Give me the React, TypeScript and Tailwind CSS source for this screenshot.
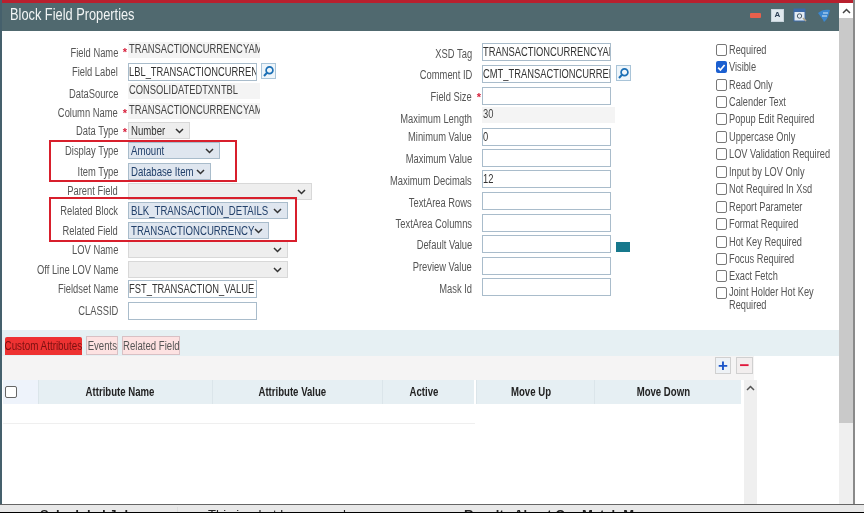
import React from 'react';

type LeftRow = { label: string; star?: boolean; row: string; pad: string; control: React.ReactNode };

const font = { fontFamily: '"Liberation Sans", Arial, sans-serif' };

// the whole capture is squeezed sideways, so text is narrower than Arial
function Squeezed({ children, className = 'origin-left scale-x-[0.78]' }: { children: React.ReactNode; className?: string }) {
  return <span className={`inline-block whitespace-nowrap ${className}`}>{children}</span>;
}

function Star() {
  return <span className="absolute right-[-9px] top-[2px] text-[11px] font-bold text-[#d8203c]">*</span>;
}

function Input({ value, w = 'w-[129px]', h = 'h-[18px]' }: { value?: string; w?: string; h?: string }) {
  return (
    <div className={`${w} ${h} shrink-0 overflow-hidden whitespace-nowrap border border-[#a9bccb] bg-white text-[13px] leading-[15px] text-[#333]`}>
      {value && <Squeezed className="origin-left scale-x-[0.72]">{value}</Squeezed>}
    </div>
  );
}

function ReadOnly({ value, w = 'w-[132px]' }: { value: string; w?: string }) {
  return (
    <div className={`${w} h-[16px] shrink-0 overflow-hidden whitespace-nowrap bg-[#f4f4f4] pl-px text-[13px] leading-[14px] text-[#444]`}>
      <Squeezed className="origin-left scale-x-[0.72]">{value}</Squeezed>
    </div>
  );
}

function Select({ value, w, tinted }: { value?: string; w: string; tinted?: boolean }) {
  return (
    <div
      className={`${w} flex h-[17px] shrink-0 items-center border pl-[2px] pr-[5px] text-[13px] ${
        tinted ? 'border-[#a9bccb] bg-[#dfe6ef] text-[#22406a]' : 'border-[#d8d8d8] bg-[#eeeeee] text-[#333]'
      }`}
    >
      <span className="w-0 flex-1 leading-[14px]">{value && <Squeezed className="origin-left scale-x-[0.74]">{value}</Squeezed>}</span>
      <svg width="9" height="6" viewBox="0 0 9 6" className="shrink-0">
        <path d="M1 1l3.5 3.5L8 1" fill="none" stroke="#333" strokeWidth="1.5" />
      </svg>
    </div>
  );
}

function SearchButton() {
  return (
    <div className="flex h-[16px] w-[15px] shrink-0 items-center justify-center border border-[#a9c4d8] bg-[#eef5fa]">
      <svg width="13" height="13" viewBox="0 0 13 13">
        <circle cx="7.5" cy="5.2" r="3.4" fill="none" stroke="#1b6fb5" strokeWidth="1.7" />
        <path d="M5 7.8L2 11" stroke="#1b6fb5" strokeWidth="2" />
      </svg>
    </div>
  );
}

const leftRows: LeftRow[] = [
  { label: 'Field Name', star: true, row: 'h-[21px]', pad: 'pt-[3px]', control: <ReadOnly value="TRANSACTIONCURRENCYAM" /> },
  {
    label: 'Field Label',
    row: 'h-[20px]',
    pad: 'pt-px',
    control: (
      <div className="flex gap-1">
        <Input value="LBL_TRANSACTIONCURREN" />
        <SearchButton />
      </div>
    ),
  },
  { label: 'DataSource', row: 'h-[20px]', pad: 'pt-[3px]', control: <ReadOnly value="CONSOLIDATEDTXNTBL" /> },
  { label: 'Column Name', star: true, row: 'h-[19px]', pad: 'pt-[2px]', control: <ReadOnly value="TRANSACTIONCURRENCYAM" /> },
  { label: 'Data Type', star: true, row: 'h-[20px]', pad: 'pt-px', control: <Select value="Number" w="w-[62px]" /> },
  { label: 'Display Type', row: 'h-[21px]', pad: 'pt-px', control: <Select value="Amount" w="w-[92px]" tinted /> },
  { label: 'Item Type', row: 'h-[20px]', pad: 'pt-px', control: <Select value="Database Item" w="w-[83px]" tinted /> },
  { label: 'Parent Field', row: 'h-[19px]', pad: 'pt-0', control: <Select w="w-[184px]" /> },
  { label: 'Related Block', row: 'h-[20px]', pad: 'pt-px', control: <Select value="BLK_TRANSACTION_DETAILS" w="w-[160px]" tinted /> },
  { label: 'Related Field', row: 'h-[19px]', pad: 'pt-px', control: <Select value="TRANSACTIONCURRENCY" w="w-[141px]" tinted /> },
  { label: 'LOV Name', row: 'h-[20px]', pad: 'pt-px', control: <Select w="w-[160px]" /> },
  { label: 'Off Line LOV Name', row: 'h-[19px]', pad: 'pt-px', control: <Select w="w-[160px]" /> },
  { label: 'Fieldset Name', row: 'h-[22px]', pad: 'pt-px', control: <Input value="FST_TRANSACTION_VALUE" /> },
  { label: 'CLASSID', row: 'h-[20px]', pad: 'pt-px', control: <Input /> },
];

type MidRow = { label: string; star?: boolean; row: string; pad: string; value?: string; extra?: React.ReactNode; readOnly?: boolean };

const midRows: MidRow[] = [
  { label: 'XSD Tag', row: 'h-[22px]', pad: 'pt-[3px]', value: 'TRANSACTIONCURRENCYAM' },
  { label: 'Comment ID', row: 'h-[22px]', pad: 'pt-[2px]', value: 'CMT_TRANSACTIONCURREN', extra: <SearchButton /> },
  { label: 'Field Size', star: true, row: 'h-[20px]', pad: 'pt-[2px]' },
  { label: 'Maximum Length', row: 'h-[21px]', pad: 'pt-[4px]', value: '30', readOnly: true },
  { label: 'Minimum Value', row: 'h-[21px]', pad: 'pt-px', value: '0' },
  { label: 'Maximum Value', row: 'h-[21px]', pad: 'pt-[2px]' },
  { label: 'Maximum Decimals', row: 'h-[22px]', pad: 'pt-[3px]', value: '12' },
  { label: 'TextArea Rows', row: 'h-[22px]', pad: 'pt-[3px]' },
  { label: 'TextArea Columns', row: 'h-[21px]', pad: 'pt-[2px]' },
  {
    label: 'Default Value',
    row: 'h-[22px]',
    pad: 'pt-[2px]',
    extra: <div className="mt-[7px] h-[10px] w-[14px] bg-[#17788c]" />,
  },
  { label: 'Preview Value', row: 'h-[21px]', pad: 'pt-[2px]' },
  { label: 'Mask Id', row: 'h-[20px]', pad: 'pt-[3px]' },
];

const checks = [
  'Required',
  'Visible',
  'Read Only',
  'Calender Text',
  'Popup Edit Required',
  'Uppercase Only',
  'LOV Validation Required',
  'Input by LOV Only',
  'Not Required In Xsd',
  'Report Parameter',
  'Format Required',
  'Hot Key Required',
  'Focus Required',
  'Exact Fetch',
];

function Check({ checked }: { checked?: boolean }) {
  if (checked) {
    return (
      <div className="flex h-[12px] w-[11px] shrink-0 items-center justify-center rounded-[2px] bg-[#1b5fd0]">
        <svg width="9" height="9" viewBox="0 0 9 9">
          <path d="M1.2 4.6l2.2 2.4 4.2-5" fill="none" stroke="#fff" strokeWidth="1.7" />
        </svg>
      </div>
    );
  }
  return <div className="h-[12px] w-[11px] shrink-0 rounded-[2px] border border-[#777] bg-white" />;
}

function HeaderIcons() {
  return (
    <div className="flex items-center">
      <div className="h-[5px] w-[11px] rounded-[1px] bg-[#e8604c]" />
      <div className="ml-[10px] flex h-[13px] w-[13px] items-center justify-center border border-[#c8d4dc] bg-[#dfe8ee] text-[8px] font-bold leading-none text-[#2b3e55]">
        A
      </div>
      <svg width="15" height="15" viewBox="0 0 15 15" className="ml-[9px]">
        <rect x="1" y="1" width="11" height="12" fill="#e3ebf3" stroke="#3c6aa8" />
        <rect x="1" y="1" width="11" height="3" fill="#3c6aa8" />
        <circle cx="6.5" cy="8" r="2.2" fill="none" stroke="#4a5b6a" />
        <path d="M10 10l3 3" stroke="#b0a58c" strokeWidth="1.6" />
      </svg>
      <svg width="15" height="15" viewBox="0 0 15 15" className="ml-[8px]">
        <path d="M2 5c3-3 8-4 12-3-1 4-2 9-6 12-1-3-4-6-6-9z" fill="#3a86d0" />
        <path d="M7 5h5M6 8h5" stroke="#d6e8f7" strokeWidth="1.2" />
      </svg>
    </div>
  );
}

const headerCell = 'flex items-center justify-center border-l border-[#dbe5ea] bg-[#e6eff3] pr-[10px]';

export default function App() {
  return (
    <div className="relative flex h-[513px] w-[864px] flex-col overflow-hidden bg-white text-[12px] text-[#555] blur-[0.35px]" style={font}>
      <div className="flex h-[504px] shrink-0">
        <div className="flex w-[853px] flex-col border-l-2 border-[#45606c]">
          <div className="h-[3px] shrink-0 bg-[#b8202e]" />
          <div className="flex min-h-0 flex-1">
            <div className="flex min-w-0 flex-1 flex-col">
              <div className="flex h-[28px] shrink-0 items-center justify-between bg-[#50696f] pb-[4px] pl-[8px] pr-[8px]">
                <span className="text-[16px] leading-none text-[#f2f5f5]">
                  <Squeezed className="origin-left scale-x-[0.8]">Block Field Properties</Squeezed>
                </span>
                <HeaderIcons />
              </div>

              <div className="relative flex h-[299px] shrink-0">
                <div className="w-[310px] shrink-0 pt-[11px]">
                  {leftRows.map((r) => (
                    <div key={r.label} className={`flex items-start ${r.row}`}>
                      <div className={`relative w-[116px] shrink-0 text-right leading-4 ${r.pad}`}>
                        <Squeezed className="origin-right scale-x-[0.78]">{r.label}</Squeezed>
                        {r.star && <Star />}
                      </div>
                      <div className="ml-[10px]">{r.control}</div>
                    </div>
                  ))}
                </div>

                <div className="w-[323px] shrink-0 pt-[12px]">
                  {midRows.map((r) => (
                    <div key={r.label} className={`flex items-start ${r.row}`}>
                      <div className={`relative w-[160px] shrink-0 text-right leading-4 ${r.pad}`}>
                        <Squeezed className="origin-right scale-x-[0.78]">{r.label}</Squeezed>
                        {r.star && <Star />}
                      </div>
                      <div className="ml-[10px] flex gap-[5px]">
                        {r.readOnly ? (
                          <ReadOnly value={r.value ?? ''} w="w-[133px]" />
                        ) : (
                          <Input value={r.value} w="w-[129px]" h="h-[18px]" />
                        )}
                        {r.extra}
                      </div>
                    </div>
                  ))}
                </div>

                <div className="flex-1 pl-[81px] pt-[10px]">
                  {checks.map((c, i) => (
                    <div key={c} className="flex h-[17.45px] items-center gap-[2px] whitespace-nowrap">
                      <Check checked={i === 1} />
                      <Squeezed className="origin-left scale-x-[0.77]">{c}</Squeezed>
                    </div>
                  ))}
                  <div className="flex gap-[2px] leading-[13px]">
                    <div className="pt-[2px]">
                      <Check />
                    </div>
                    <div className="pt-px">
                      <Squeezed className="origin-left scale-x-[0.77]">Joint Holder Hot Key</Squeezed>
                      <br />
                      <Squeezed className="origin-left scale-x-[0.77]">Required</Squeezed>
                    </div>
                  </div>
                </div>

                {/* red callouts drawn over the form */}
                <div className="absolute left-[47px] top-[109px] h-[42px] w-[188px] border-2 border-[#d81f2c]" />
                <div className="absolute left-[47px] top-[166px] h-[45px] w-[248px] border-2 border-[#d81f2c]" />
              </div>

              <div className="flex h-[26px] shrink-0 items-end gap-[4px] bg-[#e6f0f3] pb-px pl-[3px] text-[12px]">
                <div className="flex h-[18px] w-[77px] items-center justify-center rounded-t-[2px] bg-[#ee3232] text-[#7a1010]">
                  <Squeezed className="scale-x-[0.82]">Custom Attributes</Squeezed>
                </div>
                <div className="flex h-[19px] w-[32px] items-center justify-center border border-[#d8c0c4] bg-[#fde2e2] text-[#555]">
                  <Squeezed className="scale-x-[0.8]">Events</Squeezed>
                </div>
                <div className="flex h-[19px] w-[58px] items-center justify-center border border-[#d8c0c4] bg-[#fde2e2] text-[#555]">
                  <Squeezed className="scale-x-[0.8]">Related Field</Squeezed>
                </div>
              </div>

              <div className="flex min-h-0 flex-1">
                <div className="flex w-[752px] shrink-0 flex-col">
                  <div className="flex h-[24px] shrink-0 items-start justify-end gap-[5px] bg-[#f5f4f4] pr-px pt-px">
                    <div className="flex h-[17px] w-[16px] items-center justify-center border border-[#d0d0d0] bg-[#eef2f6] text-[17px] font-bold leading-none text-[#1c55c8]">
                      +
                    </div>
                    <div className="flex h-[17px] w-[17px] items-center justify-center border border-[#d0d0d0] bg-[#f2eeee] text-[17px] font-bold leading-none text-[#e0183c]">
                      −
                    </div>
                  </div>
                  <div className="flex min-h-0 flex-1">
                    <div className="w-[739px] shrink-0 pl-px">
                      <div className="flex h-[24px] text-[12px] font-bold text-[#222]">
                        <div className="flex w-[35px] items-center bg-[#eef3fb] pl-[2px]">
                          <div className="h-[12px] w-[12px] rounded-[2px] border border-[#666] bg-white" />
                        </div>
                        <div className={`${headerCell} w-[174px]`}>
                          <Squeezed className="scale-x-[0.8]">Attribute Name</Squeezed>
                        </div>
                        <div className={`${headerCell} w-[171px]`}>
                          <Squeezed className="scale-x-[0.8]">Attribute Value</Squeezed>
                        </div>
                        <div className={`${headerCell} w-[92px]`}>
                          <Squeezed className="scale-x-[0.8]">Active</Squeezed>
                        </div>
                        <div className={`${headerCell} ml-[2px] w-[118px]`}>
                          <Squeezed className="scale-x-[0.8]">Move Up</Squeezed>
                        </div>
                        <div className={`${headerCell} w-[147px]`}>
                          <Squeezed className="scale-x-[0.8]">Move Down</Squeezed>
                        </div>
                      </div>
                      <div className="h-[20px] w-[472px] border-b border-[#efefef]" />
                    </div>
                    <div className="ml-[3px] flex w-[13px] shrink-0 justify-center bg-[#efefef] pt-[5px]">
                      <svg width="9" height="6" viewBox="0 0 9 6">
                        <path d="M1 5l3.5-3.5L8 5" fill="none" stroke="#555" strokeWidth="1.5" />
                      </svg>
                    </div>
                  </div>
                </div>
              </div>
            </div>

            <div className="flex w-[14px] shrink-0 flex-col bg-[#efefef]">
              <div className="flex h-[15px] shrink-0 items-center justify-center bg-white">
                <svg width="9" height="6" viewBox="0 0 9 6">
                  <path d="M1 5l3.5-3.5L8 5" fill="none" stroke="#444" strokeWidth="1.5" />
                </svg>
              </div>
              <div className="h-[405px] shrink-0 bg-[#c9c9c9]" />
            </div>
          </div>
        </div>
        <div className="w-[2px] shrink-0 bg-[#8a8a8a]" />
      </div>

      <div className="h-px shrink-0 bg-[#666]" />
      <div className="flex h-[7px] shrink-0 overflow-hidden bg-[#e8e8e8] pt-[2px] text-[13px] leading-[16px] text-[#222]">
        <div className="w-[177px] shrink-0 pl-[40px] font-bold">Scheduled Jobs</div>
        <div className="w-[285px] shrink-0 border-l border-[#ddd] pl-[30px]">This is what happens when you run</div>
        <div className="pl-[2px] font-bold">Results About Our Match Maps</div>
      </div>
      <div className="h-px flex-1 bg-black" />
    </div>
  );
}
